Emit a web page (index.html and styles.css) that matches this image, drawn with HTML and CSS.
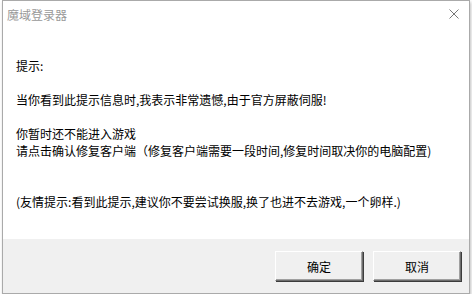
FILE: index.html
```html
<!DOCTYPE html>
<html lang="zh-CN">
  <head>
    <meta charset="UTF-8" />
    <title>魔域登录器</title>
    <link rel="stylesheet" href="styles.css">
  </head>
  <body>
    <div class="window">
      <div class="titlebar">
        <span class="title">魔域登录器</span>
        <svg class="close" width="10" height="10" viewBox="0 0 10 10">
          <path d="M0.5 0.5 L9.5 9.5 M9.5 0.5 L0.5 9.5" stroke="#777" stroke-width="1" fill="none" />
        </svg>
      </div>
      <div class="content">
        <p>提示:</p>
        <p class="gap1">当你看到此提示信息时,我表示非常遗憾,由于官方屏蔽伺服!</p>
        <p class="gap1">你暂时还不能进入游戏</p>
        <p>请点击确认修复客户端（修复客户端需要一段时间,修复时间取决你的电脑配置)</p>
        <p class="gap2">(友情提示:看到此提示,建议你不要尝试换服,换了也进不去游戏,一个卵样.)</p>
      </div>
      <div class="footer">
        <button class="btn">确定</button>
        <button class="btn">取消</button>
      </div>
    </div>
  </body>
</html>
```

FILE: styles.css
```css
body {
  margin: 0;
  background: #fff;
  font-family: "Noto Sans CJK SC", "Microsoft YaHei", sans-serif;
}
.window {
  margin-left: 2px;
  width: 466px;
  height: 292px;
  border: 1px solid #aaa;
  background: #fff;
  display: flex;
  flex-direction: column;
  box-shadow: 1px 2px 3px rgba(0, 0, 0, 0.25);
}
.titlebar {
  height: 27px;
  display: flex;
  align-items: center;
  justify-content: space-between;
  padding: 0 10px 0 4px;
}
.title {
  font-size: 12px;
  color: #999;
}
.close {
  margin-bottom: 2px;
}
.content {
  flex: 1;
  padding: 29px 0 0 13px;
  font-size: 12px;
  line-height: 17px;
  color: #000;
}
.content p {
  margin: 0;
}
.content .gap1 {
  margin-top: 17px;
}
.content .gap2 {
  margin-top: 34px;
}
.footer {
  height: 54px;
  background: #f0f0f0;
  display: flex;
  justify-content: flex-end;
  align-items: center;
  gap: 10px;
  padding-right: 8px;
}
.btn {
  width: 88px;
  height: 30px;
  background: #f0f0f0;
  border: 1px solid;
  border-color: #fff #6d6d6d #6d6d6d #fff;
  box-shadow: inset -1px -1px 0 #a0a0a0, 1px 1px 0 #3c3c3c;
  font-family: "Noto Sans CJK SC", sans-serif;
  font-size: 12px;
  color: #000;
  padding: 0;
}
```
